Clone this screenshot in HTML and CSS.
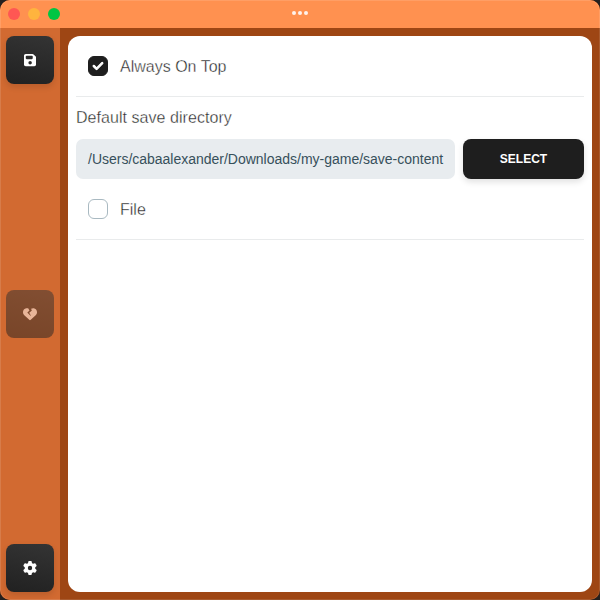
FILE: index.html
```html
<!DOCTYPE html>
<html lang="en">
<head>
<meta charset="utf-8">
<title>Settings</title>
<link rel="stylesheet" href="styles.css">
</head>
<body>
<div class="window">
  <header class="titlebar">
    <div class="lights"><i class="light close"></i><i class="light minimize"></i><i class="light zoom"></i></div>
    <div class="dots"><i></i><i></i><i></i></div>
  </header>
  <div class="body">
    <nav class="sidebar">
      <button class="icon-button" aria-label="Save"><svg width="12.25" height="14" viewBox="0 0 448 512"><path d="M64 32C28.7 32 0 60.7 0 96V416c0 35.3 28.7 64 64 64H384c35.3 0 64-28.7 64-64V173.3c0-17-6.7-33.3-18.7-45.3L352 50.7C340 38.7 323.7 32 306.7 32H64zm0 96c0-17.7 14.3-32 32-32H288c17.7 0 32 14.3 32 32v64c0 17.7-14.3 32-32 32H96c-17.7 0-32-14.3-32-32V128zM224 288a64 64 0 1 1 0 128 64 64 0 1 1 0-128z"/></svg></button>
      <button class="icon-button disabled" disabled aria-label="Health"><svg width="14" height="14" viewBox="0 0 512 512"><path d="M119.4 44.1c23.3-3.9 46.8-1.9 68.6 5.3l49.8 77.5-75.4 75.4c-1.5 1.5-2.4 3.6-2.3 5.8s1 4.2 2.6 5.7l112 104c2.9 2.7 7.4 2.9 10.5 .3s3.8-7 1.7-10.4l-60.4-98.1 90.7-75.6c2.6-2.1 3.5-5.7 2.4-8.8L296.8 61.8c28.5-16.7 62.4-23.2 95.7-17.6C461.5 55.6 512 115.2 512 185.1v5.8c0 41.5-17.2 81.2-47.6 109.5L283.7 469.1c-7.5 7-17.4 10.9-27.7 10.9s-20.2-3.9-27.7-10.9L47.6 300.4C17.2 272.1 0 232.4 0 190.9v-5.8c0-69.9 50.5-129.5 119.4-141z"/></svg></button>
      <button class="icon-button" aria-label="Settings"><svg width="14" height="14" viewBox="0 0 512 512"><path d="M495.9 166.6c3.2 8.7 .5 18.4-6.4 24.6l-43.3 39.4c1.1 8.3 1.7 16.8 1.7 25.4s-.6 17.1-1.7 25.4l43.3 39.4c6.9 6.2 9.6 15.9 6.4 24.6c-4.4 11.9-9.7 23.3-15.8 34.3l-4.7 8.1c-6.6 11-14 21.4-22.1 31.2c-5.9 7.2-15.7 9.6-24.5 6.8l-55.7-17.7c-13.4 10.3-28.2 18.9-44 25.4l-12.5 57.1c-2 9.1-9 16.3-18.2 17.8c-13.8 2.3-28 3.5-42.5 3.5s-28.7-1.2-42.5-3.5c-9.2-1.5-16.2-8.7-18.2-17.8l-12.5-57.1c-15.8-6.5-30.6-15.1-44-25.4L83.1 425.9c-8.8 2.8-18.6 .3-24.5-6.8c-8.1-9.8-15.5-20.2-22.1-31.2l-4.7-8.1c-6.1-11-11.4-22.4-15.8-34.3c-3.2-8.7-.5-18.4 6.4-24.6l43.3-39.4C64.6 273.1 64 264.6 64 256s.6-17.1 1.7-25.4L22.4 191.2c-6.9-6.2-9.6-15.9-6.4-24.6c4.4-11.9 9.7-23.3 15.8-34.3l4.7-8.1c6.6-11 14-21.4 22.1-31.2c5.9-7.2 15.7-9.6 24.5-6.8l55.7 17.7c13.4-10.3 28.2-18.9 44-25.4l12.5-57.1c2-9.1 9-16.3 18.2-17.8C227.3 1.2 241.5 0 256 0s28.7 1.2 42.5 3.5c9.2 1.5 16.2 8.7 18.2 17.8l12.5 57.1c15.8 6.5 30.6 15.1 44 25.4l55.7-17.7c8.8-2.8 18.6-.3 24.5 6.8c8.1 9.8 15.5 20.2 22.1 31.2l4.7 8.1c6.1 11 11.4 22.4 15.8 34.3zM256 336a80 80 0 1 0 0-160 80 80 0 1 0 0 160z"/></svg></button>
    </nav>
    <main class="content">
      <section class="panel">
        <div class="option">
          <span class="checkbox checked" role="checkbox" aria-checked="true"><svg width="14" height="14" viewBox="0 0 20 20"><path d="M16.707 5.293a1 1 0 010 1.414l-8 8a1 1 0 01-1.414 0l-4-4a1 1 0 011.414-1.414L8 12.586l7.293-7.293a1 1 0 011.414 0z"/></svg></span>
          <span class="label">Always On Top</span>
        </div>
        <div class="divider"></div>
        <div class="heading"><span class="label">Default save directory</span></div>
        <div class="directory">
          <div class="path">/Users/cabaalexander/Downloads/my-game/save-content</div>
          <button class="select">SELECT</button>
        </div>
        <div class="option">
          <span class="checkbox" role="checkbox" aria-checked="false"></span>
          <span class="label">File</span>
        </div>
        <div class="divider"></div>
      </section>
    </main>
  </div>
</div>
</body>
</html>
```
FILE: styles.css
```css
* { box-sizing: border-box; }
body {
  margin: 0;
  background: #24201f;
  font-family: "Liberation Sans", Arial, sans-serif;
}
button { border: 0; padding: 0; font-family: inherit; }
.window {
  position: relative;
  display: flex;
  flex-direction: column;
  width: 600px;
  height: 600px;
  border-radius: 10px;
  overflow: hidden;
  background: #9e4614;
}
.window::after {
  content: "";
  position: absolute;
  inset: 0;
  border: 1px solid rgba(255, 255, 255, .12);
  border-radius: 10px;
  pointer-events: none;
}
.titlebar {
  display: grid;
  grid-template-columns: 1fr auto 1fr;
  align-items: center;
  height: 28px;
  padding: 0 8px;
  background: #ff9150;
}
.lights { display: flex; gap: 8px; }
.light { width: 12px; height: 12px; border-radius: 50%; }
.close { background: #ff5753; }
.minimize { background: #ffb43e; }
.zoom { background: #00c543; }
.dots { display: flex; gap: 2px; padding-bottom: 2px; }
.dots i { width: 4px; height: 4px; border-radius: 50%; background: #fff3ec; }
.body { display: flex; flex: 1; }
.sidebar {
  display: flex;
  flex-direction: column;
  justify-content: space-between;
  width: 60px;
  padding: 8px 6px;
  background: #d26a31;
}
.icon-button {
  display: flex;
  align-items: center;
  justify-content: center;
  width: 48px;
  height: 48px;
  border-radius: 8px;
  background: linear-gradient(12deg, #212121, #343434);
  box-shadow: 0 3px 6px rgba(0, 0, 0, .12);
}
.icon-button svg { fill: #fff; }
.icon-button.disabled { opacity: .5; box-shadow: none; }
.content { display: flex; flex: 1; padding: 8px; }
.panel {
  flex: 1;
  padding: 0 8px;
  border-radius: 12px;
  background: #fff;
}
.option { display: flex; align-items: center; gap: 12px; height: 60px; padding: 0 12px; }
.option .label { padding-top: 2px; }
.checkbox {
  display: flex;
  align-items: center;
  justify-content: center;
  width: 20px;
  height: 20px;
  border: 1px solid #a9b9c1;
  border-radius: 6px;
}
.checkbox.checked { border-color: #1e1e1e; background: #1e1e1e; }
.checkbox svg { flex: none; fill: #fff; stroke: #fff; stroke-width: 1.6; }
.label {
  color: #222;
  font-size: 16px;
  line-height: 24px;
  -webkit-text-stroke: .35px #fff;
}
.divider { height: 1px; background: #e9ebec; }
.heading { height: 42px; padding-top: 9px; line-height: 24px; }
.heading .label { letter-spacing: .05px; }
.directory { display: flex; gap: 8px; height: 40px; }
.path {
  width: 379px;
  padding: 0 12px;
  border-radius: 7px;
  background: #e8ecef;
  color: #37505b;
  font-size: 14px;
  letter-spacing: -.01px;
  line-height: 40px;
  white-space: nowrap;
}
.select {
  flex: 1;
  border-radius: 8px;
  background: #1e1e1e;
  box-shadow: 0 3px 6px rgba(0, 0, 0, .12);
  color: #fff;
  font-size: 12px;
  font-weight: 700;
}
```
